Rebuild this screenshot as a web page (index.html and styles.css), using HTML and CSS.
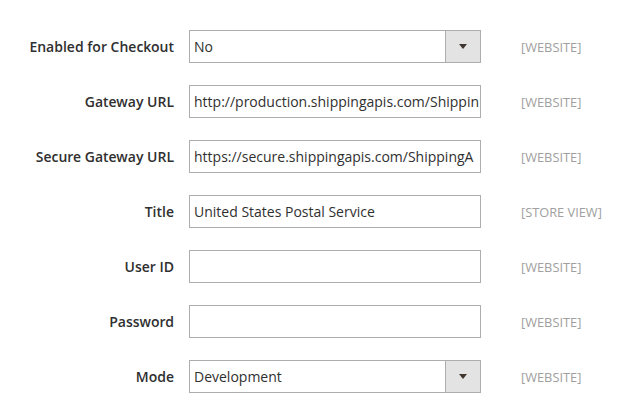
FILE: index.html
```html
<!DOCTYPE html>
<html lang="en">
<head>
    <meta charset="UTF-8">
    <title>USPS Shipping Settings</title>
    <link rel="stylesheet" href="styles.css">
</head>
<body>
    <!-- Configuración del método de envío -->
    <div class="config-form">
        <div class="field-row">
            <label class="field-label">Enabled for Checkout</label>
            <div class="field-control select-control">
                <span class="select-value">No</span>
                <span class="select-button"><span class="arrow"></span></span>
            </div>
            <span class="field-scope">[WEBSITE]</span>
        </div>

        <div class="field-row">
            <label class="field-label">Gateway URL</label>
            <div class="field-control">
                <span class="input-value">http://production.shippingapis.com/Shippin</span>
            </div>
            <span class="field-scope">[WEBSITE]</span>
        </div>

        <div class="field-row">
            <label class="field-label">Secure Gateway URL</label>
            <div class="field-control">
                <span class="input-value">https://secure.shippingapis.com/ShippingA</span>
            </div>
            <span class="field-scope">[WEBSITE]</span>
        </div>

        <div class="field-row">
            <label class="field-label">Title</label>
            <div class="field-control">
                <span class="input-value">United States Postal Service</span>
            </div>
            <span class="field-scope">[STORE VIEW]</span>
        </div>

        <div class="field-row">
            <label class="field-label">User ID</label>
            <div class="field-control">
                <span class="input-value"></span>
            </div>
            <span class="field-scope">[WEBSITE]</span>
        </div>

        <div class="field-row">
            <label class="field-label">Password</label>
            <div class="field-control">
                <span class="input-value"></span>
            </div>
            <span class="field-scope">[WEBSITE]</span>
        </div>

        <div class="field-row">
            <label class="field-label">Mode</label>
            <div class="field-control select-control">
                <span class="select-value">Development</span>
                <span class="select-button"><span class="arrow"></span></span>
            </div>
            <span class="field-scope">[WEBSITE]</span>
        </div>
    </div>
</body>
</html>
```

FILE: styles.css
```css
/* Estilos generales */
body {
    font-family: 'Open Sans', 'Liberation Sans', sans-serif;
    background-color: #fff;
    color: #303030;
    margin: 0;
}

/* Formulario */
.config-form {
    display: flex;
    flex-direction: column;
    gap: 22px;
    padding-top: 30px;
}

.field-row {
    display: grid;
    grid-template-columns: 174px 292px auto;
    column-gap: 15px;
    align-items: center;
}

.field-label {
    font-family: 'Open Sans SemiBold', 'Open Sans', sans-serif;
    font-size: 14px;
    font-weight: 600;
    text-align: right;
    color: #303030;
}

/* Campos */
.field-control {
    box-sizing: border-box;
    height: 33px;
    border: 1px solid #adadad;
    background-color: #fff;
    display: flex;
    align-items: center;
    overflow: hidden;
    font-size: 14px;
}

.input-value,
.select-value {
    padding-left: 4px;
    white-space: nowrap;
}

.select-control {
    justify-content: space-between;
}

.select-button {
    width: 34px;
    height: 100%;
    flex-shrink: 0;
    background-color: #e3e3e3;
    border-left: 1px solid #adadad;
    display: flex;
    align-items: center;
    justify-content: center;
}

.arrow {
    width: 0;
    height: 0;
    border-left: 4px solid transparent;
    border-right: 4px solid transparent;
    border-top: 5px solid #41362f;
}

.field-scope {
    margin-left: 25px;
    font-size: 12.8px;
    color: #a0a0a0;
}
```
